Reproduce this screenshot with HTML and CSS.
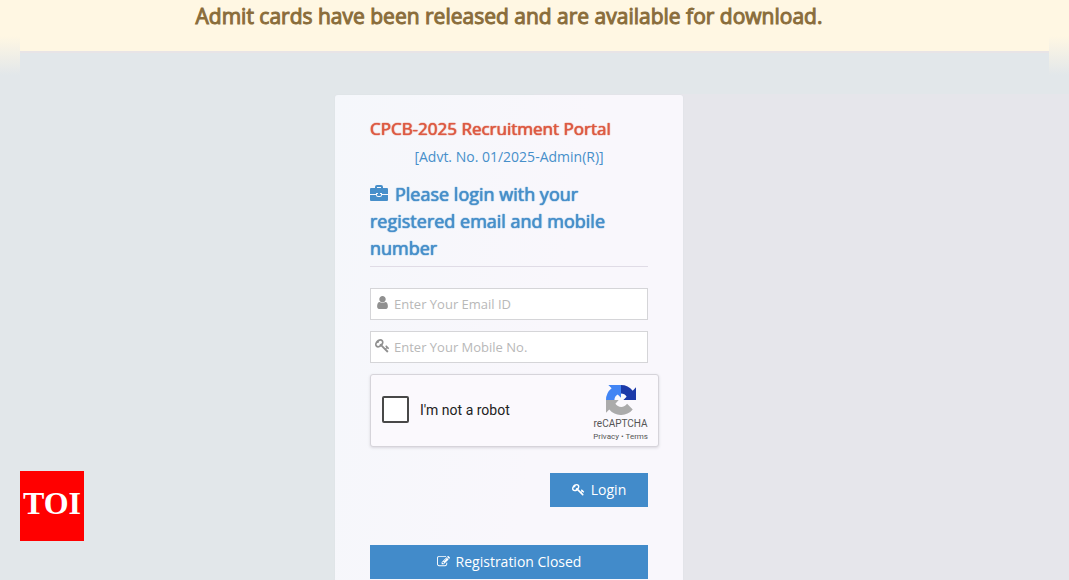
FILE: index.html
```html
<!DOCTYPE html>
<html lang="en">
<head>
<meta charset="utf-8">
<meta name="viewport" content="width=device-width, initial-scale=1">
<title>CPCB-2025 Recruitment Portal</title>
<link rel="stylesheet" href="styles.css">
</head>
<body>
<svg class="sprite" aria-hidden="true">
  <symbol id="key" viewBox="0 0 1792 1792"><path d="M832 512q0-80-56-136t-136-56-136 56-56 136q0 42 19 83-41-19-83-19-80 0-136 56t-56 136 56 136 136 56 136-56 56-136q0-42-19-83 41 19 83 19 80 0 136-56t56-136zm851 704q0 17-49 66t-66 49q-9 0-28.5-16t-36.5-33-38.5-40-24.5-26l-96 96 220 220q28 28 28 68 0 42-39 81t-81 39q-40 0-68-28l-671-671q-176 131-365 131-163 0-265.5-102.5t-102.5-265.5q0-160 95-313t248-248 313-95q163 0 265.5 102.5t102.5 265.5q0 189-131 365l355 355 96-96q-3-3-26-24.5t-40-38.5-33-36.5-16-28.5q0-17 49-66t66-49q13 0 23 10 6 6 46 44.5t82 79.5 86.5 86 73 78 28.5 41z"/></symbol>
</svg>
<header class="notice"><p class="notice-text">Admit cards have been released and are available for download.</p></header>
<main class="page">
  <section class="card">
    <h1 class="portal">CPCB-2025 Recruitment Portal</h1>
    <p class="advt">[Advt. No. 01/2025-Admin(R)]</p>
    <h2 class="prompt"><svg class="case" viewBox="0 0 18 16" aria-hidden="true"><path d="M5 3V2q0-2 2-2h4q2 0 2 2v1h4q1 0 1 1v5h-6V8h-2v1H8V8H6v1H0V4q0-1 1-1zM7 3h4V2H7zM0 10h6q0 2 2 2h2q2 0 2-2h6v5q0 1-1 1H1q-1 0-1-1zM7 9h4v1q0 1-1 1H8q-1 0-1-1z"/></svg>Please login with your registered email and mobile number</h2>
    <form class="form">
      <label class="field">
        <svg class="field-icon" viewBox="-256 0 1792 1792" aria-hidden="true"><path d="M1280 1399q0 109-62.5 187t-150.5 78h-854q-88 0-150.5-78t-62.5-187q0-85 8.5-160.5t31.5-152 58.5-131 94-89 134.5-34.5q131 128 313 128t313-128q76 0 134.5 34.5t94 89 58.5 131 31.5 152 8.5 160.5zm-256-887q0 159-112.5 271.5t-271.5 112.5-271.5-112.5-112.5-271.5 112.5-271.5 271.5-112.5 271.5 112.5 112.5 271.5z"/></svg>
        <input class="text" type="email" aria-label="Email ID" placeholder="Enter Your Email ID">
      </label>
      <label class="field">
        <svg class="field-icon" aria-hidden="true"><use href="#key"/></svg>
        <input class="text" type="tel" aria-label="Mobile number" placeholder="Enter Your Mobile No.">
      </label>
      <div class="captcha">
        <label class="robot"><input class="tick" type="checkbox"><span>I'm not a robot</span></label>
        <div class="brand">
          <svg class="brand-logo" viewBox="0 0 64 64" aria-hidden="true">
            <path fill="#1c3aa9" d="M64 32V5l-7 7A32 32 0 0 0 32 0v18q8 0 12 7l-7 7z"/>
            <path fill="#4285f4" d="M32 0H5l7 7A32 32 0 0 0 0 32h18q0-8 7-12l7 7z"/>
            <path fill="#ababab" d="M0 32v27l7-7a32 32 0 0 0 50 0L45 40a15 15 0 0 1-25 0l7-8z"/>
          </svg>
          <span class="brand-name">reCAPTCHA</span>
          <span class="legal"><a href="#privacy">Privacy</a> • <a href="#terms">Terms</a></span>
        </div>
      </div>
      <button class="button login" type="submit"><svg class="button-icon" aria-hidden="true"><use href="#key"/></svg>Login</button>
      <button class="button closed" type="button"><svg class="button-icon" viewBox="0 0 1792 1792" aria-hidden="true"><path d="M888 1184l116-116-152-152-116 116v56h96v96h56zm440-720q-16-16-33 1l-350 350q-17 17-1 33t33-1l350-350q17-17 1-33zm80 594v190q0 119-84.5 203.5t-203.5 84.5h-832q-119 0-203.5-84.5t-84.5-203.5v-832q0-119 84.5-203.5t203.5-84.5h832q63 0 117 25 15 7 18 23 3 17-9 29l-49 49q-14 14-32 8-23-6-45-6h-832q-66 0-113 47t-47 113v832q0 66 47 113t113 47h832q66 0 113-47t47-113v-126q0-13 9-22l64-64q15-15 35-7t20 29zm-96-738l288 288-672 672h-288v-288zm444 132l-92 92-288-288 92-92q28-28 68-28t68 28l152 152q28 28 28 68t-28 68z"/></svg>Registration Closed</button>
    </form>
  </section>
</main>
<a class="toi" href="#toi">TOI</a>
</body>
</html>
```
FILE: styles.css
```css
* { box-sizing: border-box; }
body {
  margin: 0;
  min-height: 100vh;
  display: flex;
  flex-direction: column;
  font-family: "Open Sans", "Noto Sans", sans-serif;
  font-size: 14px;
  background: linear-gradient(#e2e7ea 0 94px, transparent 94px), linear-gradient(90deg, #e2e7ea 50%, #e6e6eb 50%);
}
h1, h2, p { margin: 0; }
svg { fill: currentColor; }
.sprite { position: absolute; width: 0; height: 0; }
.notice {
  padding: 0 20px;
  background: linear-gradient(#fff7e3 36px, #e2e7ea 75px);
}
.notice-text {
  min-height: 75px;
  padding-right: 51px;
  font-size: 21px;
  line-height: 32px;
  text-align: center;
  color: #8a6d3b;
  -webkit-text-stroke: 1px #8a6d3b;
  background: linear-gradient(#fff7e3 51px, #e8e4e6 51px 53px, #e2e7ea 53px);
}
.page {
  flex: 1;
  display: flex;
  justify-content: center;
  padding: 20px 51px 0 0;
}
.card {
  width: 348px;
  padding: 20px 35px 0;
  border-radius: 3px 3px 0 0;
  background: linear-gradient(100deg, #f5f7fb, #f9f7fc 60%);
  box-shadow: 0 0 2px #dddfe5;
}
.portal, .prompt {
  font-weight: 400;
  text-shadow: 0 0 1px currentColor, 0 0 1px currentColor;
}
.portal {
  font-size: 17px;
  line-height: 28px;
  color: #dd5a43;
}
.advt {
  line-height: 28px;
  text-align: center;
  color: #478fca;
}
.prompt {
  margin-top: 10px;
  padding-bottom: 4px;
  border-bottom: 1px solid #e0dce6;
  font-size: 18px;
  line-height: 27px;
  color: #478fca;
}
.case { width: 18px; height: 16px; margin-right: 7px; }
.form { display: flex; flex-direction: column; margin-top: 21px; }
.field {
  display: flex;
  align-items: center;
  height: 32px;
  margin-bottom: 11px;
  padding-left: 4px;
  gap: 4px;
  border: 1px solid #d5d5d8;
  background: #fff;
  color: #909090;
}
.field-icon { width: 15px; height: 17px; flex: none; margin-bottom: 3px; }
.text {
  flex: 1;
  min-width: 0;
  padding: 0;
  border: 0;
  outline: 0;
  background: none;
  font: inherit;
  font-size: 13px;
  color: #858585;
}
.text::placeholder { color: #b8b8b8; opacity: 1; }
.captcha {
  display: flex;
  justify-content: space-between;
  align-items: center;
  height: 73px;
  margin-right: -11px;
  padding: 0 10px 0 11px;
  border: 1px solid #d6d4da;
  border-radius: 3px;
  background: #fbf9fd;
  box-shadow: 0 1px 3px #d8d6dd;
  font-family: Roboto, "Liberation Sans", sans-serif;
}
.robot { display: flex; align-items: center; gap: 11px; padding-bottom: 2px; color: #222; }
.tick {
  appearance: none;
  width: 27px;
  height: 27px;
  margin: 0;
  border: 2px solid #484848;
  border-radius: 2px;
  background: #fff;
}
.brand { display: flex; flex-direction: column; align-items: center; color: #555; }
.brand-logo { width: 30px; height: 30px; margin-top: 4px; }
.brand-name { font-size: 10px; line-height: 18px; }
.legal { font-size: 8px; line-height: 8px; }
.legal a { color: inherit; text-decoration: none; }
.button {
  display: flex;
  align-items: center;
  justify-content: center;
  gap: 6px;
  height: 34px;
  padding: 0 0 2px;
  border: 0;
  background: #428bca;
  color: #fff;
  font: inherit;
}
.button-icon { width: 13px; height: 13px; }
.login { align-self: flex-end; width: 98px; margin: 26px 0 38px; }
.toi {
  position: fixed;
  left: 20px;
  bottom: 39px;
  width: 64px;
  height: 70px;
  background: #f00;
  color: #fff;
  font: bold 32px/64px "Liberation Serif", serif;
  text-align: center;
  text-decoration: none;
}
```
